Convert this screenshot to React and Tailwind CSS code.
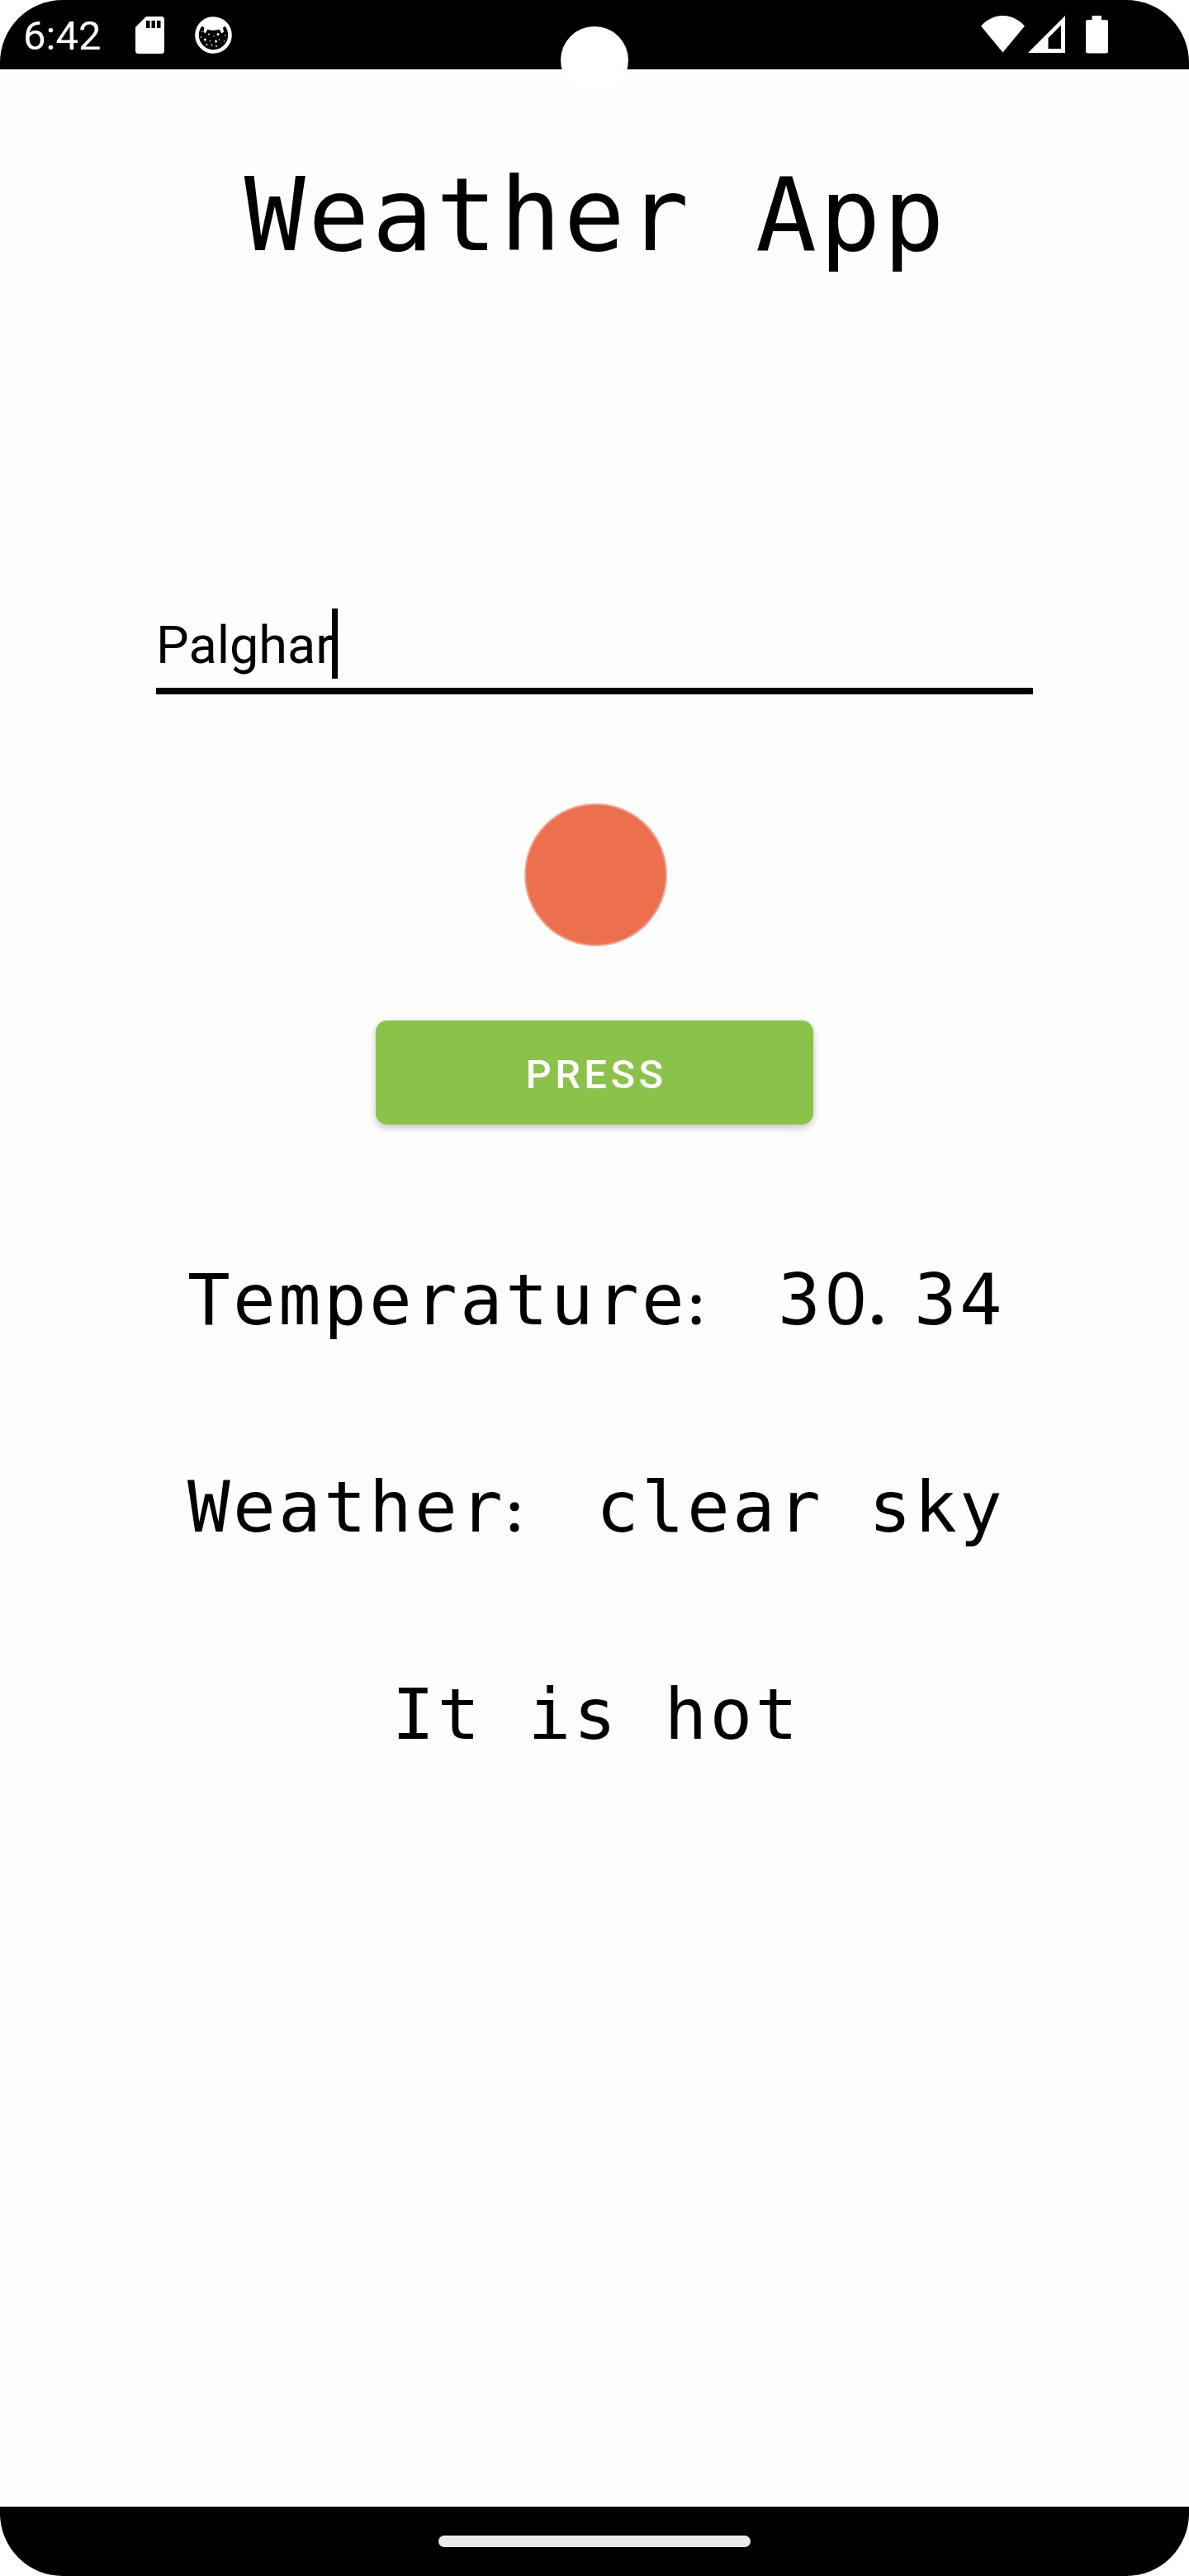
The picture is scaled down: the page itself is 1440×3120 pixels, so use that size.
const mono = "font-['DejaVu_Sans_Mono',monospace]";

function Colon() {
  return <span className="inline-block w-[55px] pl-[2px] text-left font-['Open_Sans',sans-serif] text-[64px] leading-none font-bold tracking-normal">:</span>;
}

function Dot() {
  return <span className="inline-block w-[55px] text-left font-['Open_Sans',sans-serif] text-[74px] leading-none font-bold tracking-normal">.</span>;
}

function Zero() {
  return <span className="inline-block w-[55px] text-center font-['Noto_Sans',sans-serif] text-[88px] leading-none tracking-normal">0</span>;
}

function SdCard() {
  return (
    <svg className="h-[45px] w-[35px]" viewBox="0 0 35 45">
      <path fill="#fff" d="M13 0H31.500A3.500 3.500 0 0 1 35 3.500V41.500A3.500 3.500 0 0 1 31.500 45H3.500A3.500 3.500 0 0 1 0 41.500V13Z" />
      <path fill="#000" d="M13 5h4.500v9H13zM19.500 5H24v9h-4.500zM26 5h4.500v9H26z" />
    </svg>
  );
}

function Debug() {
  return (
    <svg className="h-[45px] w-[45px]" viewBox="0 0 45 45">
      <circle cx="22.500" cy="22.500" r="20" fill="#000" stroke="#fff" strokeWidth="4.600" />
      <path fill="#fff" d="M7 11Q12 2 22.500 2T38 11L34 13.500 35 18.500 32.500 20.500 29.500 15.500Q22.500 18 15.500 15.500L12.500 20.500 10.500 18.500 11.500 13.500Z" />
      <g fill="#fff">
        <circle cx="28" cy="21.500" r="1.500" />
        <circle cx="17" cy="21.500" r="1" />
        <circle cx="12.500" cy="28" r="1.500" />
        <circle cx="25.500" cy="30" r="1.500" />
        <circle cx="29.500" cy="28" r=".8" />
        <circle cx="18.500" cy="29.500" r=".8" />
        <circle cx="7.500" cy="25" r=".8" />
        <circle cx="37" cy="23" r=".8" />
        <circle cx="35.500" cy="30" r=".8" />
        <circle cx="14.500" cy="34" r=".9" />
        <circle cx="20.500" cy="34.500" r=".9" />
        <circle cx="26" cy="36" r=".9" />
        <circle cx="8.500" cy="18.500" r=".7" />
        <circle cx="23" cy="24" r=".7" />
      </g>
    </svg>
  );
}

function Wifi() {
  return (
    <svg className="h-[45px] w-[53px]" viewBox="0 0 53 45">
      <path fill="#fff" d="M0 12.500C15 -4.200 38 -4.200 53 12.500L26.500 44.500Z" />
    </svg>
  );
}

function Signal() {
  return (
    <svg className="ml-[4px] h-[45px] w-[45px]" viewBox="0 0 45 45">
      <path fill="#fff" fillRule="evenodd" d="M45 0V45H0ZM40 11.500L24.500 27V40H40Z" />
    </svg>
  );
}

function Battery() {
  return (
    <svg className="ml-[25px] h-[46px] w-[27px]" viewBox="0 0 27 46">
      <path fill="#fff" d="M7.500 0H19V5H24.500A2.500 2.500 0 0 1 27 7.500V43A2.500 2.500 0 0 1 24.500 45.500H2.500A2.500 2.500 0 0 1 0 43V7.500A2.500 2.500 0 0 1 2.500 5H7.500Z" />
    </svg>
  );
}

function StatusBar() {
  return (
    <header className="relative flex h-[84px] shrink-0 items-start justify-between bg-black pr-[98px] pl-[28px] text-white">
      <div className="flex items-start">
        <span className="mt-[14px] w-[136px] font-['Roboto',sans-serif] text-[49px] leading-[60px]">6:42</span>
        <div className="mt-[20px] flex gap-[37px]">
          <SdCard />
          <Debug />
        </div>
      </div>
      <div className="mt-[19px] flex">
        <Wifi />
        <Signal />
        <Battery />
      </div>
      <div className="absolute top-[32px] left-[679px] h-[82px] w-[82px] rounded-full bg-white" />
    </header>
  );
}

export default function App() {
  return (
    <div className="h-[3120px] w-[1440px] bg-white">
      <div className="flex h-full flex-col overflow-hidden rounded-[76px] bg-[#fdfdfd] text-black">
        <StatusBar />
        <main className="flex flex-1 flex-col items-center">
          <h1 className={`${mono} mt-[107px] pl-[3px] text-[123px] leading-[140px] tracking-[3.35px] whitespace-pre`}>Weather App</h1>
          <div className="mt-[406px] flex h-[104px] w-[1062px] items-start border-b-[8px] border-black">
            <span className="mt-[5px] w-[213px] font-['Roboto',sans-serif] text-[63px] leading-[80px] whitespace-nowrap">Palghar</span>
            <span className="h-[85px] w-[7px] bg-black" />
          </div>
          <div className="mt-[132px] ml-[3px] h-[173px] w-[173px] rounded-full border-2 border-[#f3a48f] bg-[#ed704e]" />
          <button className="mt-[90px] flex h-[126px] w-[530px] items-center justify-center rounded-[14px] bg-[#8bc34a] pt-[4px] pl-[4px] font-['Roboto',sans-serif] text-[49px] leading-none font-medium tracking-[4.375px] text-white shadow-[0_5px_9px_rgba(0,0,0,0.16),0_1px_8px_rgba(0,0,0,0.08)]">
            PRESS
          </button>
          <div className={`${mono} mt-[162px] flex flex-col items-center gap-[151px] pl-[4px] text-[86px] tracking-[3.22px] whitespace-pre`}>
            <p className="h-[100px] leading-[100px]">Temperature<Colon /> 3<Zero /><Dot />34</p>
            <p className="h-[100px] leading-[100px]">Weather<Colon /> clear sky</p>
            <p className="h-[100px] leading-[100px]">It is hot</p>
          </div>
        </main>
        <footer className="flex h-[84px] shrink-0 justify-center bg-black pt-[35px]">
          <div className="h-[14px] w-[378px] rounded-full bg-[#ebebeb]" />
        </footer>
      </div>
    </div>
  );
}
